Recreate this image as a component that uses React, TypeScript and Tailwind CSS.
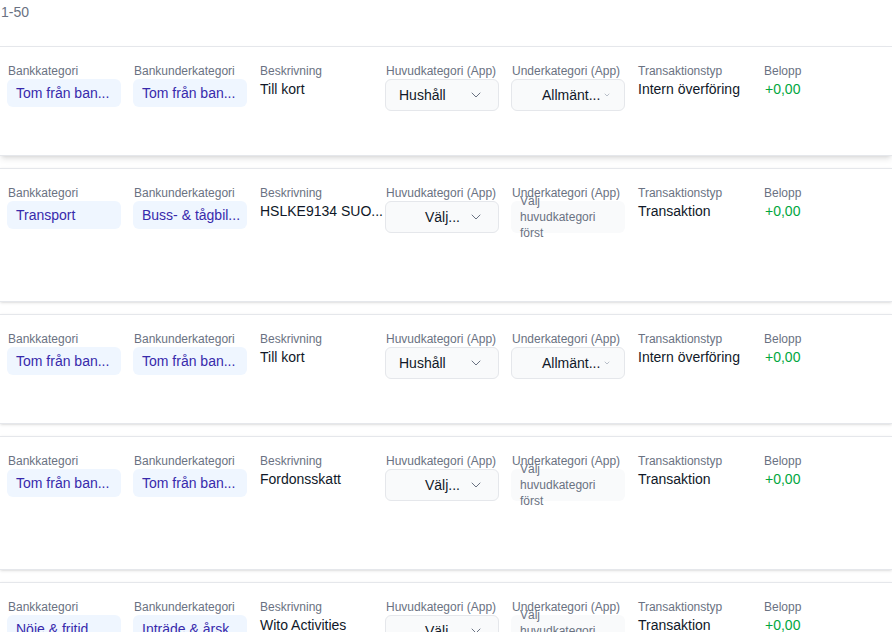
import { ChevronDown } from "lucide-react";

type Row = {
    bank: string;
    bankSub: string;
    desc: string;
    main: string | null;
    mainPad: string;
    sub: string | null;
    subPad: string;
    type: string;
    amount: string;
    tall: boolean;
};

const rows: Row[] = [
    { bank: "Tom från ban...", bankSub: "Tom från ban...", desc: "Till kort", main: "Hushåll", mainPad: "pl-[13px]", sub: "Allmänt...", subPad: "pl-[30px]", type: "Intern överföring", amount: "+0,00", tall: false },
    { bank: "Transport", bankSub: "Buss- & tågbil...", desc: "HSLKE9134 SUO...", main: "Välj...", mainPad: "pl-[39px]", sub: null, subPad: "", type: "Transaktion", amount: "+0,00", tall: true },
    { bank: "Tom från ban...", bankSub: "Tom från ban...", desc: "Till kort", main: "Hushåll", mainPad: "pl-[13px]", sub: "Allmänt...", subPad: "pl-[30px]", type: "Intern överföring", amount: "+0,00", tall: false },
    { bank: "Tom från ban...", bankSub: "Tom från ban...", desc: "Fordonsskatt", main: "Välj...", mainPad: "pl-[39px]", sub: null, subPad: "", type: "Transaktion", amount: "+0,00", tall: true },
    { bank: "Nöje & fritid", bankSub: "Inträde & årsk...", desc: "Wito Activities", main: "Välj...", mainPad: "pl-[39px]", sub: null, subPad: "", type: "Transaktion", amount: "+0,00", tall: true },
];

const Label = ({ children }: { children: string }) => (
    <div className="pl-px text-xs leading-4 text-gray-500 whitespace-nowrap">{children}</div>
);

const Pill = ({ text }: { text: string }) => (
    <div className="h-7 rounded-md bg-blue-50 px-[9px] flex items-center text-sm text-indigo-800 whitespace-nowrap overflow-hidden">
        {text}
    </div>
);

const App = () => {
    return (
        <div className="min-h-screen bg-white font-['Liberation_Sans',Arial,sans-serif]">
            <div className="h-[46px] pt-[2px] pl-px text-sm leading-5 text-gray-500">1-50</div>

            <div className="flex flex-col gap-3">
                {rows.map((row, i) => (
                    <div
                        key={i}
                        className={`bg-white border-y border-gray-200 ${row.tall ? "h-[134px]" : "h-[110px]"} ${i === 0 ? "shadow-md" : "shadow-sm"}`}
                    >
                        <div className="grid grid-cols-[repeat(7,114px)] gap-x-3 pl-[7px] pt-4">
                            <div>
                                <Label>Bankkategori</Label>
                                <Pill text={row.bank} />
                            </div>
                            <div>
                                <Label>Bankunderkategori</Label>
                                <Pill text={row.bankSub} />
                            </div>
                            <div>
                                <Label>Beskrivning</Label>
                                <div className="pl-px text-sm leading-5 text-gray-900 whitespace-nowrap">{row.desc}</div>
                            </div>
                            <div>
                                <Label>Huvudkategori (App)</Label>
                                <div className="relative h-8 rounded-md border border-gray-200 bg-gray-50 flex items-center text-sm text-gray-900">
                                    <span className={row.mainPad}>{row.main}</span>
                                    <ChevronDown className="absolute right-[14px] top-[7px] text-gray-500" size={16} strokeWidth={1.5} />
                                </div>
                            </div>
                            <div className="relative z-0">
                                <Label>Underkategori (App)</Label>
                                {row.sub ? (
                                    <div className="relative h-8 rounded-md border border-gray-200 bg-gray-50 flex items-center text-sm text-gray-900">
                                        <span className={row.subPad}>{row.sub}</span>
                                        <ChevronDown className="absolute right-[13px] top-[11px] text-gray-400" size={8} strokeWidth={2} />
                                    </div>
                                ) : (
                                    <div className="h-8 rounded-md bg-gray-50 flex items-center px-[9px] text-xs leading-4 text-gray-500">
                                        <span>Välj huvudkategori först</span>
                                    </div>
                                )}
                            </div>
                            <div>
                                <Label>Transaktionstyp</Label>
                                <div className="pl-px text-sm leading-5 text-gray-900 whitespace-nowrap">{row.type}</div>
                            </div>
                            <div>
                                <Label>Belopp</Label>
                                <div className="pl-0.5 text-sm leading-5 text-green-600">{row.amount}</div>
                            </div>
                        </div>
                    </div>
                ))}
            </div>
        </div>
    );
};

export default App;
